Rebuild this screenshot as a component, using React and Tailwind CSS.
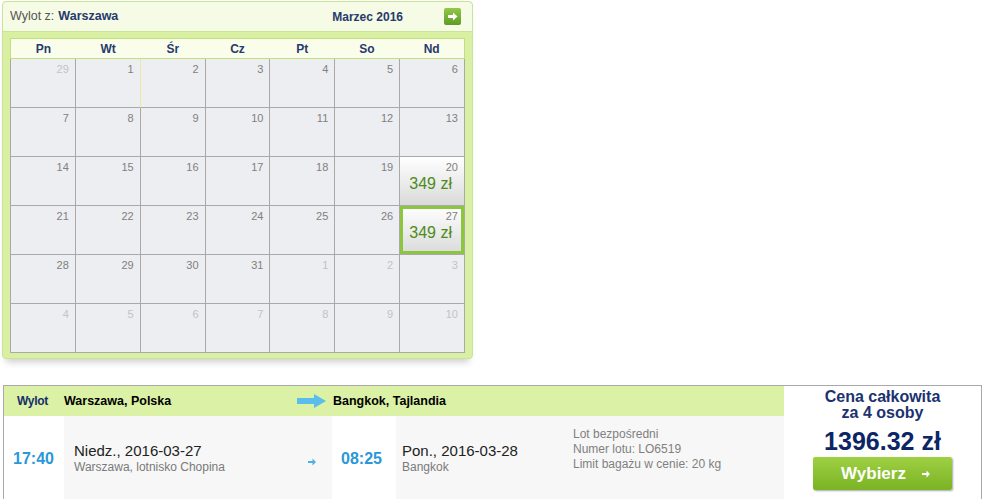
import React from "react";

const weeks = [
  [[29, true], [1], [2], [3], [4], [5], [6]],
  [[7], [8], [9], [10], [11], [12], [13]],
  [[14], [15], [16], [17], [18], [19], [20, false, "349 zł"]],
  [[21], [22], [23], [24], [25], [26], [27, false, "349 zł", true]],
  [[28], [29], [30], [31], [1, true], [2, true], [3, true]],
  [[4, true], [5, true], [6, true], [7, true], [8, true], [9, true], [10, true]],
];

const dayNames = ["Pn", "Wt", "Śr", "Cz", "Pt", "So", "Nd"];

function DayCell({ day, outside, price, selected, yellowEdge }) {
  let cls = "relative h-[49px] border-r border-b border-[#a9a9a9] ";
  if (yellowEdge) cls += "border-r-[#f1e6a8] ";
  if (price) cls += "bg-gradient-to-b from-white to-[#dadada] ";
  else cls += "bg-[#eceef1] ";
  return (
    <div className={cls}>
      {selected && (
        <div className="absolute inset-0 border-[3px] border-[#8cc63e]" />
      )}
      <div
        className={
          "absolute right-[6px] top-[5px] text-[11px] leading-none " +
          (outside ? "text-[#c3c3c3]" : "text-[#808080]")
        }
      >
        {day}
      </div>
      {price && (
        <div className="absolute right-[12px] top-[19px] text-[16px] leading-none text-[#4d8a1c]">
          {price}
        </div>
      )}
    </div>
  );
}

function Calendar() {
  return (
    <div className="ml-[2px] mt-[1px] w-[471px] rounded-[4px] border border-[#c9e49a] bg-[#d9f0a3] shadow-[0_7px_7px_-4px_rgba(0,0,0,0.2)]">
      <div className="flex h-[30px] items-center rounded-t-[4px] border-b border-[#c9e49a] bg-[#f5fbe4] pl-[7px] pr-[11px] text-[12.5px]">
        <span className="text-[#555]">Wylot z:</span>
        <span className="ml-[4px] font-bold text-[#273a6e]">Warszawa</span>
        <span className="ml-auto text-[12px] font-bold text-[#273a6e]">Marzec 2016</span>
        <button className="ml-[41px] mb-[1px] flex h-[17px] w-[17px] items-center justify-center rounded-[2px] bg-gradient-to-b from-[#93c948] to-[#5e9a26]">
          <svg width="10" height="9" viewBox="0 0 10 9">
            <path d="M0 3h5V0.5L9.5 4.5 5 8.5V6H0z" fill="#fff" />
          </svg>
        </button>
      </div>
      <div className="px-[7px] pt-[6px] pb-[5px]">
        <div className="grid h-[21px] grid-cols-7 items-center border border-[#c2df84] bg-[#fafde9] text-center text-[12px] font-bold text-[#273a6e]">
          {dayNames.map((d) => (
            <div key={d}>{d}</div>
          ))}
        </div>
        <div className="grid grid-cols-7 border-l border-[#a9a9a9]">
          {weeks.map((week, wi) =>
            week.map(([day, outside, price, selected], di) => (
              <DayCell
                key={wi + "-" + di}
                day={day}
                outside={outside}
                price={price}
                selected={selected}
                yellowEdge={wi === 0 && di === 1}
              />
            ))
          )}
        </div>
      </div>
    </div>
  );
}

function FlightRow() {
  return (
    <div className="ml-[3px] mt-[26px] flex border-t border-l border-[#a9a9a9]">
      <div className="w-[780px]">
        <div className="flex h-[30px] items-center bg-[#dbf1a5] text-[12.5px] font-bold">
          <div className="w-[60px] pl-[13px] text-[12px] tracking-[-0.3px] text-[#152f6a]">Wylot</div>
          <div className="flex w-[268px] items-center pr-[6px] text-black">
            <span>Warszawa, Polska</span>
            <svg className="ml-auto" width="29" height="14" viewBox="0 0 29 14">
              <path d="M0 4h17V0l12 7-12 7v-4H0z" fill="#5bbde9" />
            </svg>
          </div>
          <div className="pl-[1px] text-black">Bangkok, Tajlandia</div>
        </div>
        <div className="flex h-[83px]">
          <div className="w-[60px] bg-white pl-[9px] pt-[31px] text-[16px] font-bold text-[#2a98d8]">17:40</div>
          <div className="flex w-[268px] bg-[#f7f7f7] pl-[10px] pt-[25px]">
            <div>
              <div className="text-[15px] leading-[19px] text-[#222]">Niedz., 2016-03-27</div>
              <div className="text-[12px] leading-[15px] text-[#7a7a7a]">Warszawa, lotnisko Chopina</div>
            </div>
            <svg className="ml-auto mr-[16px] mt-[17px]" width="8" height="8" viewBox="0 0 8 8">
              <path d="M0 3h4.5V0.5L8 4 4.5 7.5V5H0z" fill="#4fb1e3" />
            </svg>
          </div>
          <div className="w-[64px] bg-white pl-[9px] pt-[31px] text-[16px] font-bold text-[#2a98d8]">08:25</div>
          <div className="flex flex-1 bg-[#f7f7f7] pt-[25px]">
            <div className="w-[177px] pl-[6px]">
              <div className="text-[15px] leading-[19px] text-[#222]">Pon., 2016-03-28</div>
              <div className="text-[12px] leading-[15px] text-[#7a7a7a]">Bangkok</div>
            </div>
            <div className="-mt-[14px] text-[12px] leading-[15px] text-[#808080]">
              <div>Lot bezpośredni</div>
              <div>Numer lotu: LO6519</div>
              <div>Limit bagażu w cenie: 20 kg</div>
            </div>
          </div>
        </div>
      </div>
      <div className="flex flex-1 flex-col items-center border-r border-[#a9a9a9] bg-white">
        <div className="mt-[3px] text-center text-[16px] font-bold leading-[16px] text-[#1b3270]">
          Cena całkowita
          <br />
          za 4 osoby
        </div>
        <div className="mt-[7px] text-[25px] font-bold leading-[26px] text-[#0c2566]">1396.32 zł</div>
        <button className="mt-[3px] flex h-[33px] w-[139px] items-center justify-center rounded-[2px] bg-gradient-to-b from-[#9fd043] to-[#7ab323] pl-[6px] text-[17px] font-bold text-white shadow-[1px_1px_2px_rgba(0,0,0,0.35)]">
          Wybierz
          <svg className="ml-[16px]" width="8" height="8" viewBox="0 0 8 8">
            <path d="M0 3h4.5V0.5L8 4 4.5 7.5V5H0z" fill="#fff" />
          </svg>
        </button>
      </div>
    </div>
  );
}

export default function App() {
  return (
    <div className="h-[501px] w-[982px] overflow-hidden bg-white font-['Liberation_Sans',Arial,sans-serif]">
      <Calendar />
      <FlightRow />
    </div>
  );
}
